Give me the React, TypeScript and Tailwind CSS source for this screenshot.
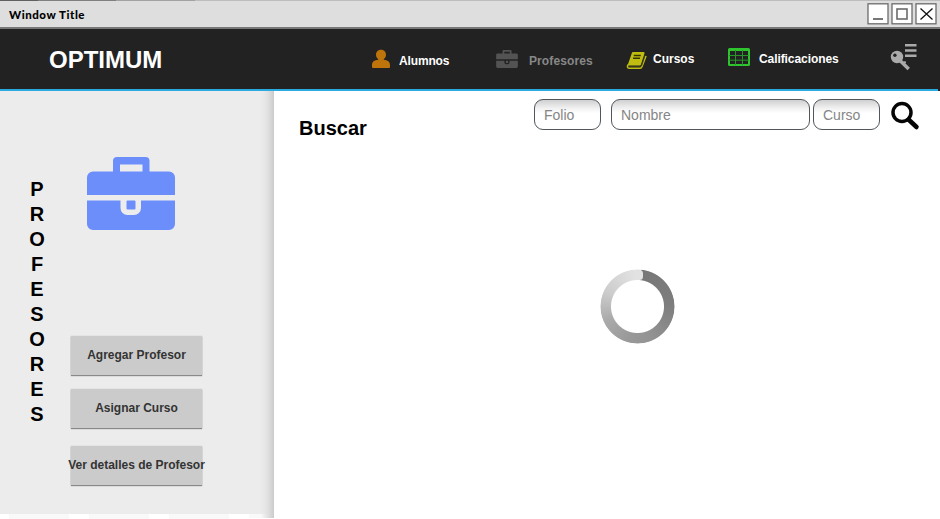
import React from "react";

function Briefcase({ className }: { className: string }) {
  return (
    <svg viewBox="0 0 88 73" className={className} fill="currentColor">
      <path d="M26 14.500V4a4 4 0 0 1 4-4h28.500a4 4 0 0 1 4 4v10.500H82a6 6 0 0 1 6 6V38H0V20.500a6 6 0 0 1 6-6zm7 0h22.500V7.500H33z" fillRule="evenodd" />
      <path d="M0 43.500h33.500V51a7 7 0 0 0 7 7h6.500a7 7 0 0 0 7-7v-7.500H88V67a6 6 0 0 1-6 6H6a6 6 0 0 1-6-6z" />
      <rect x="39.500" y="43.500" width="9" height="9" rx="1" />
    </svg>
  );
}

function TitleBar() {
  return (
    <div className="h-[29px] bg-[#dedede] border-b-2 border-[#777] flex flex-col">
      <div className="h-px flex">
        <span className="w-[38px] bg-[#625f62]" />
        <span className="w-[78px] bg-[#807f80]" />
        <span className="w-[79px] bg-[#a2a2a2]" />
        <span className="flex-1 bg-[#bdbdbd]" />
      </div>
      <div className="flex justify-between pl-[9px] pr-[3px]">
        <span className="mt-[6px] h-4 text-[11.5px] leading-4 font-black tracking-[0.55px] text-black font-['Lato',sans-serif]">Window Title</span>
        <svg width="70" height="26" viewBox="0 0 70 26" fill="none">
          <g fill="#fff" stroke="#6c6c6c" strokeWidth="1.300">
            <rect x="1" y="2.800" width="20" height="20" />
            <rect x="25" y="2.800" width="20" height="20" />
            <rect x="49" y="2.800" width="20" height="20" />
          </g>
          <path d="M6 18h10" stroke="#777" strokeWidth="2" />
          <rect x="30" y="8" width="10" height="10" stroke="#6c6c6c" strokeWidth="1.600" />
          <path d="M53.500 7.500l12 11M65.500 7.500l-12 11" stroke="#111" strokeWidth="1.300" />
        </svg>
      </div>
    </div>
  );
}

function NavBar() {
  return (
    <header className="h-[62px] bg-[#222] flex flex-col justify-between">
      <div className="h-[60px] flex items-start text-xs leading-4 font-bold text-white whitespace-nowrap">
        <h1 className="ml-[49px] mt-[16px] w-[322px] text-2xl leading-[30px]">OPTIMUM</h1>
        <div className="flex w-[125px]">
          <svg width="20" height="20" viewBox="0 0 20 20" className="mt-[20px] mr-[8px]" fill="#bd740b">
            <path d="M10 .800c3.200 0 5 2.200 5 5 0 1.900-.800 3.400-2.200 4.300v.600c3.900.300 6.200 2 6.200 5.300v1.700c0 .800-.500 1.300-1.300 1.300H2.300c-.800 0-1.300-.500-1.300-1.300V16c0-3.300 2.300-5 6.200-5.300v-.600C5.800 9.200 5 7.700 5 5.800c0-2.800 1.800-5 5-5z" />
          </svg>
          <span className="mt-[24px] tracking-[-0.15px]">Alumnos</span>
        </div>
        <div className="flex w-[130px]">
          <Briefcase className="mt-[21px] mr-[11px] w-[22px] h-[18px] text-[#535353]" />
          <span className="mt-[24px] tracking-[0.1px] text-[#888]">Profesores</span>
        </div>
        <div className="flex w-[102px]">
          <svg width="22" height="20" viewBox="0 0 22 20" className="mt-[22px] mr-[5px]" fill="none">
            <path d="M7 2h10.500L13.800 13.500H3z" fill="#c0bd10" stroke="#c0bd10" strokeWidth="2.200" strokeLinejoin="round" />
            <path d="M2 13.500c-1 2-.500 3.800 1 3.800h11c1 0 1.600-.500 2-1.800L20 5" stroke="#c0bd10" strokeWidth="1.600" />
            <path d="M3.200 15.500h11c1 0 1.400-.400 1.700-1.300L19 4" stroke="#3a3a12" strokeWidth=".900" />
            <path d="M7.800 4.500h7M7 7.200h7" stroke="#353500" strokeWidth="1.400" />
          </svg>
          <span className="mt-[22px]">Cursos</span>
        </div>
        <div className="flex w-[162px]">
          <svg width="22" height="19" viewBox="0 0 22 19" className="mt-[19px] mr-[9px]" fill="none" stroke="#2fc52f">
            <rect x="1" y="1" width="20" height="16" rx="0.500" strokeWidth="2" />
            <path d="M1 2.500h20" strokeWidth="1" />
            <path d="M1 7.500h20M1 12.200h20M7.500 2v15M14.500 2v15" stroke="#27962a" strokeWidth="1" />
          </svg>
          <span className="mt-[22px] tracking-[-0.08px]">Calificaciones</span>
        </div>
        <svg width="28" height="29" viewBox="0 0 28 29" className="mt-[14px]">
          <g stroke="#aaa" fill="none">
            <path d="M15 2.200h11.500M15 7.500h11.500M15 12.800h11.500" strokeWidth="2.400" />
            <path d="M9.500 17l9.200 9" strokeWidth="3.500" />
            <path d="M12.500 20l3.300-1" strokeWidth="2" />
          </g>
          <circle cx="7" cy="14" r="6.200" fill="#aaa" />
          <circle cx="4.900" cy="12.200" r="1.700" fill="#222" />
        </svg>
      </div>
      <div className="h-[2px] w-[938px] bg-[#29abe2]" />
    </header>
  );
}

function ActionButton({ children, className = "" }: { children: React.ReactNode; className?: string }) {
  return (
    <button className={`w-[131px] h-[39px] pb-[2px] flex items-center justify-center bg-[#cbcbcb] shadow-[0_1px_1px_#888,0_0_1px_#bbb] text-xs font-bold text-[#333] whitespace-nowrap ${className}`}>
      {children}
    </button>
  );
}

function Sidebar() {
  return (
    <aside className="w-[274px] h-[428px] flex flex-col">
      <div className="h-[423px] flex bg-[linear-gradient(to_right,#ececec_260px,#e8e8e8_264px,#dddddd_269px,#cbcbcb_274px)]">
        <div className="ml-[22px] mt-[86px] w-[30px] flex flex-col text-center text-xl leading-[25px] font-bold text-black">
          {"PROFESORES".split("").map((letter, i) => (
            <span key={i}>{letter}</span>
          ))}
        </div>
        <div className="ml-[19px] flex flex-col">
          <Briefcase className="ml-[16px] mt-[66px] w-[88px] h-[73px] text-[#6b8efb]" />
          <ActionButton className="mt-[106px]">Agregar Profesor</ActionButton>
          <ActionButton className="mt-[14px]">Asignar Curso</ActionButton>
          <ActionButton className="mt-[18px]">Ver detalles de Profesor</ActionButton>
        </div>
      </div>
      <div className="h-[5px] flex gap-[20px] pl-[9px]">
        <span className="w-[60px] bg-[#f9f9f9]" />
        <span className="w-[60px] bg-[#f9f9f9]" />
        <span className="w-[60px] bg-[#f9f9f9]" />
        <span className="w-[25px] h-[4px] bg-[linear-gradient(to_right,#f9f9f9_12px,#eeeeee_15px,#cbcbcb_25px)]" />
      </div>
    </aside>
  );
}

function SearchField({ placeholder, className }: { placeholder: string; className: string }) {
  return (
    <input
      placeholder={placeholder}
      className={`mt-[8px] h-[30.5px] rounded-[9px] border border-[#50565b] pl-[9px] pt-px text-sm text-black placeholder:text-[#858585] bg-[linear-gradient(to_bottom,#d0d0d0,#f0f0f0_8px,#ffffff_13px)] ${className}`}
    />
  );
}

function Spinner() {
  return (
    <div className="mt-[133px] ml-[326px] w-[76px] h-[76px] relative">
      <div className="w-[75px] h-[75px] rounded-full bg-[conic-gradient(from_5deg,#777_0deg,#7d7d7d_80deg,#929292_150deg,#999_190deg,#aaa_240deg,#ccc_290deg,#e2e2e2_350deg,#e2e2e2_360deg)] [mask:radial-gradient(circle,transparent_26px,black_27px,black_36.5px,transparent_37.5px)]" />
      <span className="absolute left-[36px] top-[1px] w-[7px] h-[10px] rounded-full bg-[#e2e2e2]" />
    </div>
  );
}

export default function App() {
  return (
    <div className="w-[940px] h-[519px] overflow-hidden bg-white font-['Liberation_Sans',Arial,sans-serif]">
      <TitleBar />
      <NavBar />
      <div className="flex">
        <Sidebar />
        <main className="w-[666px] flex flex-col">
          <div className="h-[45px] flex items-start">
            <h2 className="ml-[25px] mt-[25px] w-[235px] text-xl leading-6 font-bold text-black">Buscar</h2>
            <SearchField placeholder="Folio" className="w-[67px]" />
            <SearchField placeholder="Nombre" className="ml-[10px] w-[199px]" />
            <SearchField placeholder="Curso" className="ml-[3px] w-[67px]" />
            <svg width="30" height="30" viewBox="0 0 30 30" className="ml-[10px] mt-[10px]" fill="none" stroke="#050505">
              <circle cx="12" cy="11.500" r="9" strokeWidth="3.500" />
              <path d="M18.500 18.500l8 7.500" strokeWidth="4.500" strokeLinecap="round" />
            </svg>
          </div>
          <Spinner />
        </main>
      </div>
    </div>
  );
}
